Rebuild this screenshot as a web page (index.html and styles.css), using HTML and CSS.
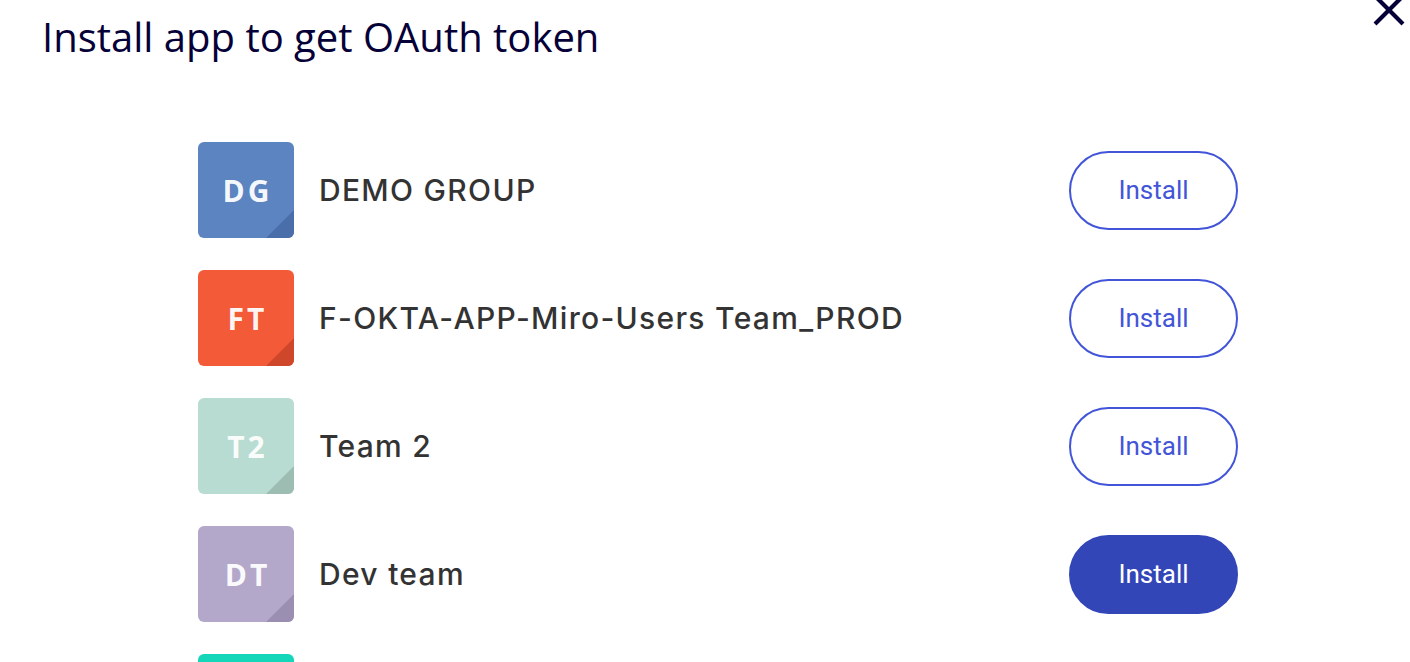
FILE: index.html
```html
<!DOCTYPE html>
<html>
<head>
<meta charset="utf-8">
<link rel="stylesheet" href="styles.css">
</head>
<body>
<div class="modal">
  <header class="head">
    <h1 class="title">Install app to get OAuth token</h1>
    <button class="close" aria-label="Close">
      <svg width="34" height="34" viewBox="0 0 34 34"><path d="M3 3 L31 31 M31 3 L3 31" stroke="#050038" stroke-width="4.2" stroke-linecap="butt"/></svg>
    </button>
  </header>
  <ul class="list">
    <li class="row">
      <div class="avatar blue"><span>DG</span></div>
      <div class="name">DEMO GROUP</div>
      <button class="btn">Install</button>
    </li>
    <li class="row">
      <div class="avatar red"><span>FT</span></div>
      <div class="name">F-OKTA-APP-Miro-Users Team_PROD</div>
      <button class="btn">Install</button>
    </li>
    <li class="row">
      <div class="avatar mint"><span>T2</span></div>
      <div class="name">Team 2</div>
      <button class="btn">Install</button>
    </li>
    <li class="row">
      <div class="avatar lilac"><span>DT</span></div>
      <div class="name">Dev team</div>
      <button class="btn filled">Install</button>
    </li>
    <li class="row">
      <div class="avatar teal"></div>
    </li>
  </ul>
</div>
</body>
</html>
```
FILE: styles.css
```css
html, body {
  margin: 0;
  padding: 0;
  background: #ffffff;
  overflow: hidden;
  height: 662px;
}
.modal {
  position: relative;
  width: 1410px;
  height: 662px;
  overflow: hidden;
}
.head {
  display: flex;
  justify-content: space-between;
  align-items: flex-start;
  padding: 0 4px 0 42px;
  height: 142px;
}
.title {
  margin: 11px 0 0 0;
  font-family: "Open Sans", sans-serif;
  font-weight: 400;
  font-size: 40px;
  line-height: 52px;
  color: #050038;
}
.close {
  border: 0;
  background: none;
  padding: 0;
  margin-top: -7px;
  margin-right: 0;
  cursor: pointer;
}
.list {
  list-style: none;
  margin: 0;
  padding: 0 0 0 198px;
}
.row {
  display: flex;
  align-items: center;
  height: 96px;
  margin-bottom: 32px;
  width: 1040px;
}
.avatar {
  position: relative;
  width: 96px;
  height: 96px;
  border-radius: 6px;
  overflow: hidden;
  flex: none;
  display: flex;
  align-items: center;
  justify-content: center;
}
.avatar::after {
  content: "";
  position: absolute;
  right: 0;
  bottom: 0;
  width: 0;
  height: 0;
  border-style: solid;
  border-width: 0 0 28px 28px;
  border-color: transparent transparent var(--fold) transparent;
}
.avatar span {
  font-family: "Open Sans", sans-serif;
  font-weight: 700;
  font-size: 30px;
  letter-spacing: 3px;
  margin-left: 3px;
  color: rgba(255,255,255,0.95);
}
.blue { background: #5b84c1; --fold: #4a6ea9; }
.red { background: #f35a37; --fold: #cf472b; }
.mint { background: #b9dcd2; --fold: #9dbcb2; }
.lilac { background: #b3a8ca; --fold: #9a8eb1; }
.teal { background: #14d7b9; --fold: #10b59c; }
.name {
  flex: 1;
  margin-left: 25px;
  font-family: "Inter", sans-serif;
  font-weight: 500;
  font-size: 30px;
  color: #333333;
  letter-spacing: 1.3px;
}
.btn {
  flex: none;
  width: 169px;
  height: 79px;
  border: 2px solid #4255d9;
  border-radius: 40px;
  background: #ffffff;
  color: #4255d9;
  font-family: "Roboto", sans-serif;
  font-size: 26px;
  font-weight: 400;
  cursor: pointer;
  box-sizing: border-box;
}
.btn.filled {
  background: #3346b7;
  border-color: #3346b7;
  color: #ffffff;
}
```
